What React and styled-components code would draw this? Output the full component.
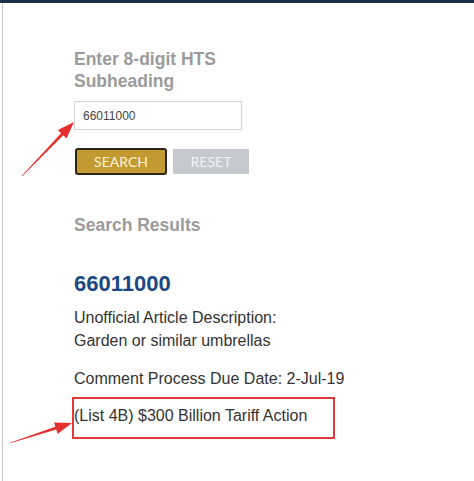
import React from "react";
import styled, { createGlobalStyle } from "styled-components";

const GlobalStyle = createGlobalStyle`
  html, body {
    margin: 0;
    padding: 0;
    background: #ffffff;
  }
  body {
    font-family: "Liberation Sans", Arial, sans-serif;
  }
`;

const Page = styled.div`
  position: relative;
  width: 474px;
  height: 481px;
  overflow: hidden;
  background: #ffffff;
  display: flex;
  flex-direction: column;
`;

const TopBar = styled.div`
  height: 3px;
  background: #1d3046;
  flex-shrink: 0;
`;

const Body = styled.div`
  flex: 1;
  padding-left: 2px;
  display: flex;
`;

const Panel = styled.div`
  flex: 1;
  border-left: 1px solid #c6c6c6;
  padding: 45px 0 0 71px;
`;

const SectionTitle = styled.h2`
  margin: 0;
  width: 170px;
  font-size: 17.5px;
  line-height: 22px;
  font-weight: bold;
  color: #9b9b9b;
`;

const SearchInput = styled.input`
  display: block;
  box-sizing: border-box;
  margin-top: 9px;
  width: 168px;
  height: 29px;
  padding: 0 8px;
  border: 1px solid #d4d4d4;
  font-family: "Liberation Sans", Arial, sans-serif;
  font-size: 12px;
  color: #444444;
  outline: none;
`;

const Buttons = styled.div`
  display: flex;
  align-items: center;
  gap: 6px;
  margin: 18px 0 0 1px;
`;

const Button = styled.button`
  box-sizing: border-box;
  font-family: Lato, "Liberation Sans", sans-serif;
  font-size: 14px;
  text-transform: uppercase;
  color: ${(p) => (p.$primary ? "#fbf3dc" : "#f1f2f4")};
  background: ${(p) => (p.$primary ? "#c29a2f" : "#c6cad0")};
  border: ${(p) => (p.$primary ? "2px solid #2b251a" : "none")};
  border-radius: ${(p) => (p.$primary ? "3px" : "0")};
  width: ${(p) => (p.$primary ? "92px" : "76px")};
  height: ${(p) => (p.$primary ? "27px" : "25px")};
  padding: 0;
  cursor: pointer;
`;

const ResultsTitle = styled(SectionTitle)`
  margin-top: 39px;
`;

const Code = styled.div`
  margin-top: 35px;
  font-size: 22px;
  line-height: 26px;
  font-weight: bold;
  color: #1b4782;
`;

const Detail = styled.p`
  margin: ${(p) => (p.$first ? "9px" : "14px")} 0 0;
  font-size: 16px;
  line-height: 23.4px;
  color: #333333;
`;

const Marks = styled.svg`
  position: absolute;
  left: 0;
  top: 0;
  pointer-events: none;
`;

const RED = "#e4302e";

const App = () => (
  <Page>
    <GlobalStyle />
    <TopBar />
    <Body>
      <Panel>
        <SectionTitle>Enter 8-digit HTS Subheading</SectionTitle>
        <SearchInput defaultValue="66011000" />
        <Buttons>
          <Button $primary>Search</Button>
          <Button>Reset</Button>
        </Buttons>
        <ResultsTitle>Search Results</ResultsTitle>
        <Code>66011000</Code>
        <Detail $first>
          Unofficial Article Description:
          <br />
          Garden or similar umbrellas
        </Detail>
        <Detail>Comment Process Due Date: 2-Jul-19</Detail>
        <Detail>(List 4B) $300 Billion Tariff Action</Detail>
      </Panel>
    </Body>
    {/* annotation marks drawn over the screenshot */}
    <Marks width="474" height="481" viewBox="0 0 474 481">
      <polygon
        fill={RED}
        points="22.2,176.2 63.3,135.2 66.5,138.4 74,122 57.9,130 61.1,133.2 21.8,175.8"
      />
      <polygon
        fill={RED}
        points="10.1,443.3 56.3,429.6 57.6,433.9 72,423 54,422.5 55.3,426.8 9.9,442.7"
      />
      <rect x="73" y="398" width="261" height="40" fill="none" stroke="#e03a3a" strokeWidth="2" />
    </Marks>
  </Page>
);

export default App;
